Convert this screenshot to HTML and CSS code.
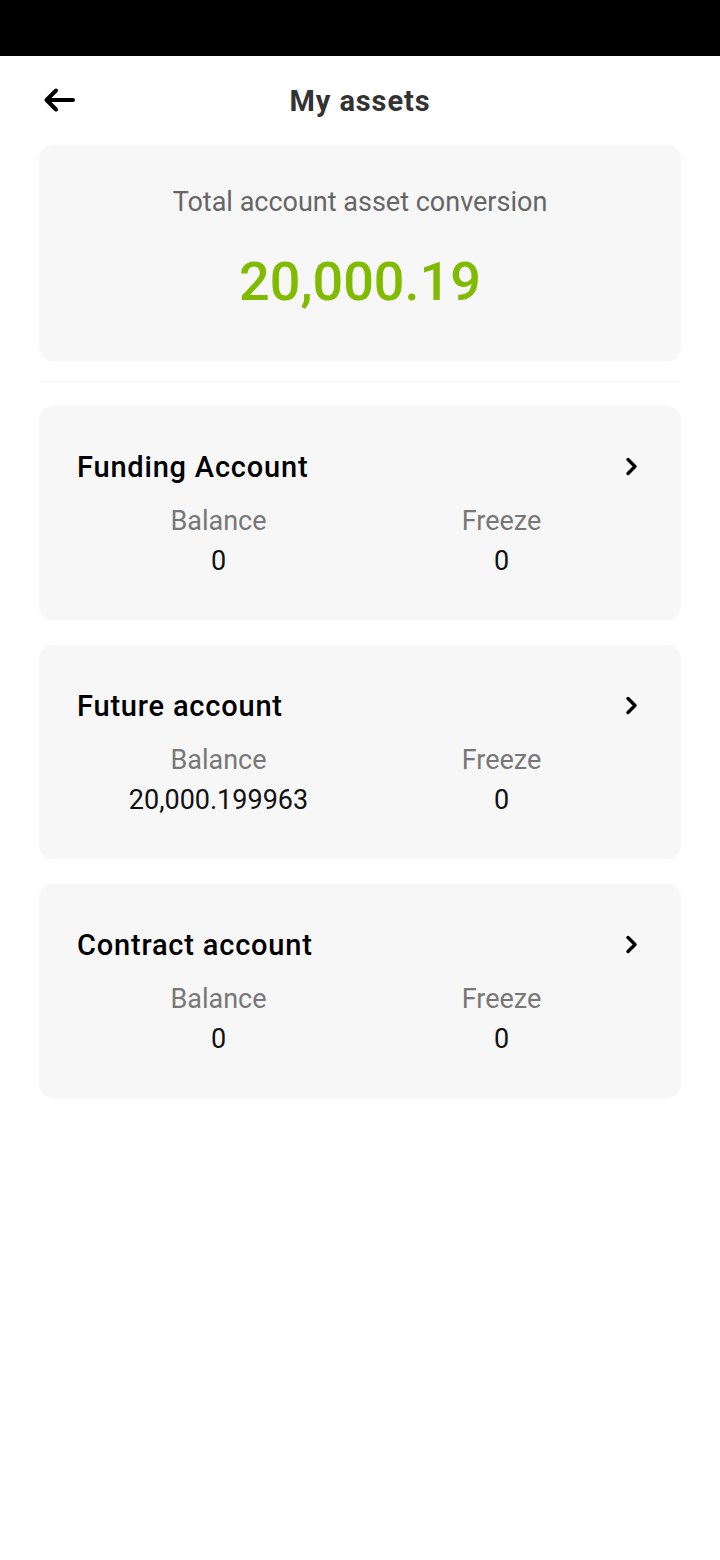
FILE: index.html
```html
<!DOCTYPE html>
<html lang="en">
<head>
<meta charset="utf-8">
<title>My assets</title>
<link rel="stylesheet" href="styles.css">
</head>
<body>
<div class="status-bar"></div>
<header class="topbar">
  <button class="back" aria-label="Back">
    <svg width="32" height="26" viewBox="0 0 32 26"><path d="M30 13H4M13 3.5L3.5 13L13 22.5" fill="none" stroke="#000" stroke-width="4" stroke-linecap="round" stroke-linejoin="round"/></svg>
  </button>
  <h1 class="title">My assets</h1>
</header>
<main class="content">
  <section class="summary">
    <div class="summary-label">Total account asset conversion</div>
    <div class="summary-value">20,000.19</div>
  </section>
  <hr class="divider">
  <section class="account">
    <div class="account-head">
      <span class="account-name">Funding Account</span>
      <svg class="chev" width="14" height="20" viewBox="0 0 14 20"><path d="M3 2.5L10 9.5L3 16.5" fill="none" stroke="#000" stroke-width="3.4" stroke-linecap="round" stroke-linejoin="round"/></svg>
    </div>
    <div class="account-cols">
      <div class="col"><div class="col-label">Balance</div><div class="col-value">0</div></div>
      <div class="col"><div class="col-label">Freeze</div><div class="col-value">0</div></div>
    </div>
  </section>
  <section class="account">
    <div class="account-head">
      <span class="account-name">Future account</span>
      <svg class="chev" width="14" height="20" viewBox="0 0 14 20"><path d="M3 2.5L10 9.5L3 16.5" fill="none" stroke="#000" stroke-width="3.4" stroke-linecap="round" stroke-linejoin="round"/></svg>
    </div>
    <div class="account-cols">
      <div class="col"><div class="col-label">Balance</div><div class="col-value">20,000.199963</div></div>
      <div class="col"><div class="col-label">Freeze</div><div class="col-value">0</div></div>
    </div>
  </section>
  <section class="account">
    <div class="account-head">
      <span class="account-name">Contract account</span>
      <svg class="chev" width="14" height="20" viewBox="0 0 14 20"><path d="M3 2.5L10 9.5L3 16.5" fill="none" stroke="#000" stroke-width="3.4" stroke-linecap="round" stroke-linejoin="round"/></svg>
    </div>
    <div class="account-cols">
      <div class="col"><div class="col-label">Balance</div><div class="col-value">0</div></div>
      <div class="col"><div class="col-label">Freeze</div><div class="col-value">0</div></div>
    </div>
  </section>
</main>
</body>
</html>
```
FILE: styles.css
```css
* { box-sizing: border-box; }
html, body {
  margin: 0;
  padding: 0;
  background: #fff;
  font-family: Roboto, "Noto Sans", "Liberation Sans", sans-serif;
}
.status-bar {
  height: 56px;
  background: #000;
}
.topbar {
  height: 89px;
  display: flex;
  align-items: center;
  justify-content: center;
  position: relative;
}
.back {
  position: absolute;
  left: 43px;
  top: 31px;
  padding: 0;
  border: 0;
  background: none;
  display: flex;
}
.title {
  margin: 0;
  font-size: 29px;
  font-weight: 700;
  letter-spacing: 0.9px;
  color: #333;
  line-height: 32px;
}
.content {
  padding: 0 39px;
}
.summary {
  background: #f7f7f7;
  border-radius: 14px;
  padding: 41px 0 47px;
  text-align: center;
}
.summary-label {
  font-size: 27px;
  line-height: 32px;
  color: #666;
}
.summary-value {
  margin-top: 32px;
  font-size: 54px;
  line-height: 64px;
  font-weight: 500;
  color: #80bb00;
}
.divider {
  border: 0;
  height: 1px;
  background: #f2f2f2;
  margin: 20px 0 24px;
}
.account {
  background: #f7f7f7;
  border-radius: 14px;
  padding: 45px 38px 43px;
  margin-bottom: 25px;
}
.account-head {
  display: flex;
  align-items: center;
  justify-content: space-between;
  height: 32px;
}
.account-name {
  font-size: 29px;
  font-weight: 500;
  letter-spacing: 0.8px;
  color: #000;
  line-height: 32px;
}
.chev {
  margin-right: 4px;
}
.account-cols {
  display: grid;
  grid-template-columns: 1fr 1fr;
  margin-top: 22px;
  text-align: center;
}
.col-label {
  font-size: 27px;
  line-height: 32px;
  color: #777;
}
.col-value {
  margin-top: 8px;
  font-size: 27px;
  line-height: 32px;
  color: #111;
}
```
